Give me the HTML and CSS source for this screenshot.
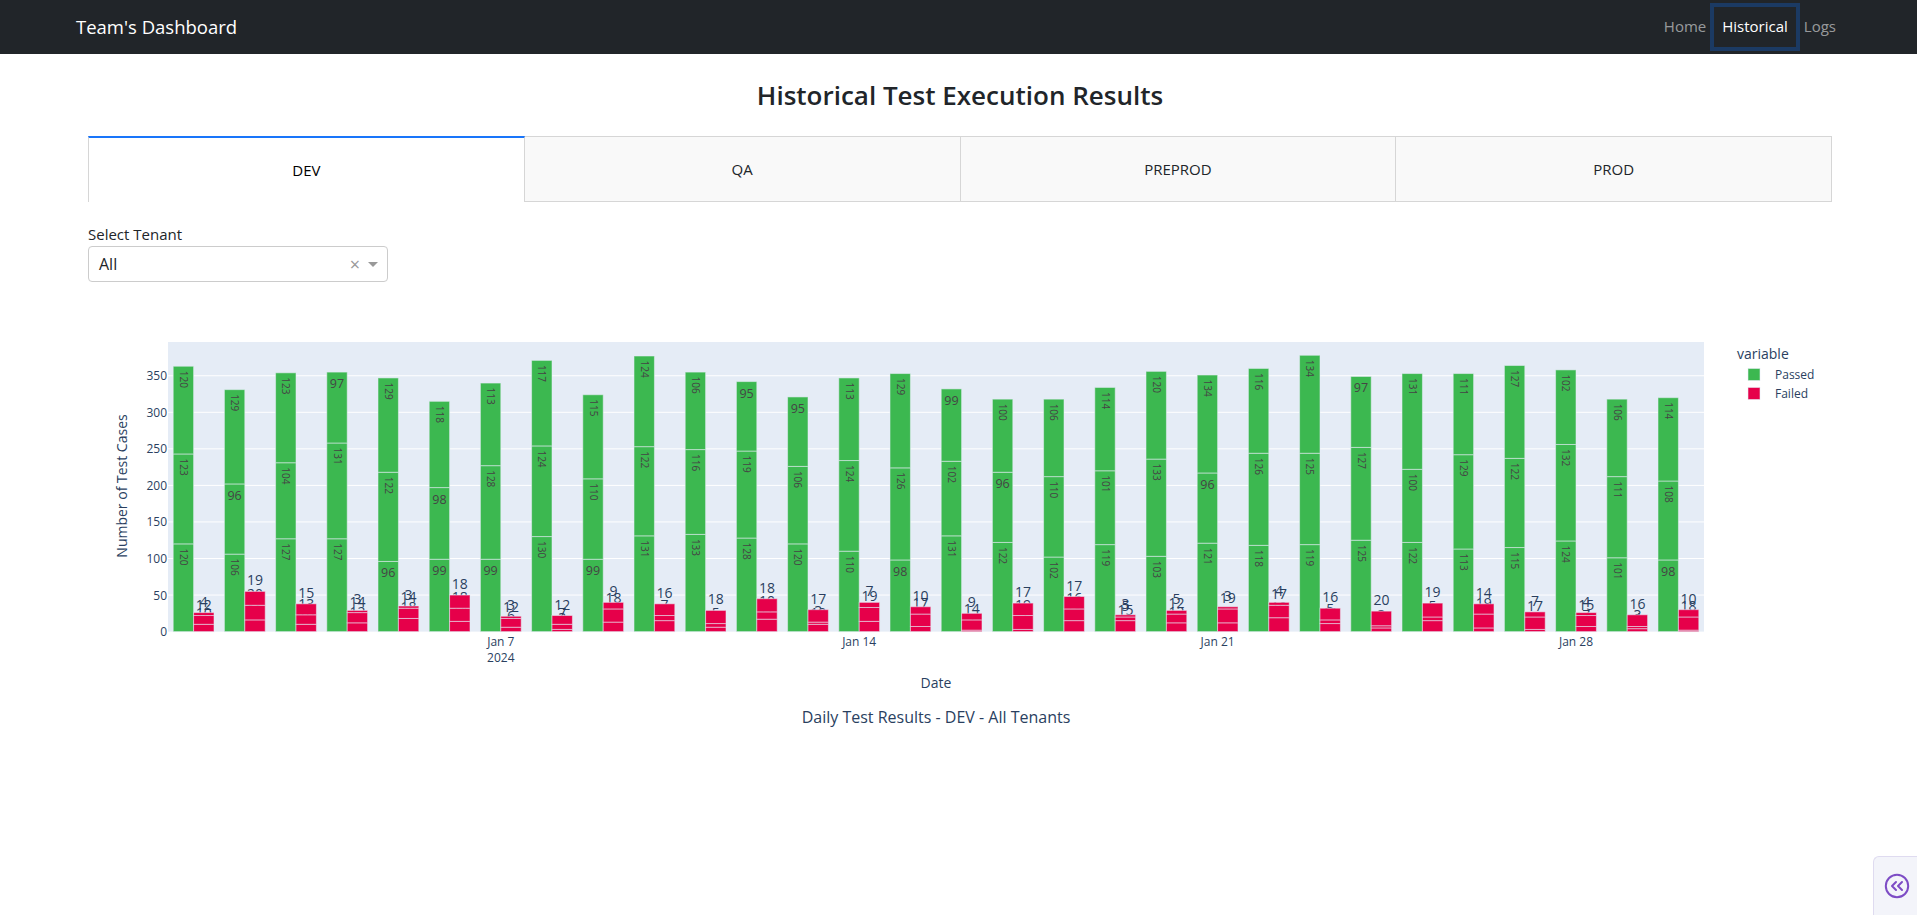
FILE: index.html
```html
<!DOCTYPE html>
<html lang="en">
<head>
    <meta charset="UTF-8">
    <title>Team's Dashboard</title>
    <link rel="stylesheet" href="styles.css">
</head>
<body>
    <!-- top navigation -->
    <nav class="navbar">
        <a class="brand">Team's Dashboard</a>
        <div class="nav-links">
            <a class="nav-link">Home</a>
            <a class="nav-link active">Historical</a>
            <a class="nav-link">Logs</a>
        </div>
    </nav>

    <main class="page">
        <h2 class="page-title">Historical Test Execution Results</h2>

        <div class="tabs">
            <div class="tab selected">DEV</div>
            <div class="tab">QA</div>
            <div class="tab">PREPROD</div>
            <div class="tab">PROD</div>
        </div>

        <div class="filter">
            <label class="filter-label">Select Tenant</label>
            <div class="select">
                <span class="select-value">All</span>
                <span class="select-clear">×</span>
                <span class="select-arrow"></span>
            </div>
        </div>

        <!-- chart.js fills this svg -->
        <svg id="chart" class="chart" width="1744" height="440"></svg>
    </main>

    <!-- collapsed side panel -->
    <div class="side-toggle">
        <svg width="26" height="26" viewBox="0 0 26 26" fill="none" stroke="#7d4cc5" stroke-width="2" stroke-linecap="round" stroke-linejoin="round">
            <circle cx="13" cy="13" r="11.2"/>
            <polyline points="12,9 8,13 12,17"/>
            <polyline points="18,9 14,13 18,17"/>
        </svg>
    </div>

    <script src="chart.js"></script>
</body>
</html>
```

FILE: styles.css
```css
* {
    box-sizing: border-box;
}

body {
    margin: 0;
    background-color: #fff;
    color: #212529;
    font-family: "Open Sans", "Noto Sans", sans-serif;
    font-size: 15px;
    overflow: hidden;
}

/* navbar */
.navbar {
    height: 54px;
    background-color: #212529;
    display: flex;
    align-items: center;
    justify-content: space-between;
    padding: 0 73px 0 76px;
}

.brand {
    color: #fff;
    font-size: 18.5px;
    padding-bottom: 2px;
}

.nav-links {
    display: flex;
}

.nav-link {
    height: 40px;
    line-height: 38px;
    padding: 0 8px;
    color: rgba(255, 255, 255, .55);
}

.nav-link.active {
    color: #fff;
    box-shadow: 0 0 0 4px #1b3a63;
}

/* page */
.page {
    padding: 0 85px 0 88px;
}

.page-title {
    margin: 0;
    height: 82px;
    line-height: 82px;
    text-align: center;
    font-size: 26px;
    font-weight: 600;
}

/* tabs */
.tabs {
    display: flex;
    height: 66px;
}

.tab {
    flex: 1;
    display: flex;
    align-items: center;
    justify-content: center;
    background-color: #f9f9f9;
    border: 1px solid #d6d6d6;
    border-left: none;
    font-size: 15px;
}

.tab.selected {
    background-color: #fff;
    border-left: 1px solid #d6d6d6;
    border-top: 2px solid #1975fa;
    border-bottom: none;
    color: #000;
}

/* tenant filter */
.filter {
    margin-top: 22px;
    width: 300px;
}

.filter-label {
    display: block;
    height: 22px;
    line-height: 20px;
}

.select {
    height: 36px;
    border: 1px solid #ccc;
    border-radius: 4px;
    display: flex;
    align-items: center;
    padding: 0 9px 0 10px;
}

.select-value {
    flex: 1;
    font-size: 16px;
}

.select-clear {
    color: #999;
    font-size: 18px;
    line-height: 1;
    margin-right: 8px;
}

.select-arrow {
    border-style: solid;
    border-width: 5px 5px 0;
    border-color: #999 transparent transparent;
}

/* chart */
.chart {
    display: block;
    margin-top: 18px;
    font-family: "Open Sans", verdana, arial, sans-serif;
}

.grid-line {
    stroke: #fff;
    stroke-width: 1;
}

.axis-text {
    fill: #2a3f5f;
    font-size: 12px;
}

.axis-title {
    fill: #2a3f5f;
    font-size: 14px;
}

.chart-title {
    fill: #2a3f5f;
    font-size: 16px;
}

.seg {
    stroke: #e5ecf6;
    stroke-opacity: .55;
    stroke-width: 1;
}

.seg-in {
    fill: #444;
}

.seg-out {
    fill: #2a3f5f;
    font-size: 14px;
}

/* bottom corner toggle */
.side-toggle {
    position: fixed;
    right: 0;
    bottom: 0;
    width: 44px;
    height: 59px;
    background-color: #f3f4fa;
    border: 1px solid #dfdbf0;
    border-right: none;
    border-bottom: none;
    border-top-left-radius: 6px;
    padding: 16px 0 0 10px;
}

.side-toggle svg {
    display: block;
}
```

FILE: chart.js
```js
(function () {
    // bottom, middle, top of each stack, one entry per day from Jan 1
    var passed = [
        [120, 123, 120], [106, 96, 129], [127, 104, 123], [127, 131, 97], [96, 122, 129],
        [99, 98, 118], [99, 128, 113], [130, 124, 117], [99, 110, 115], [131, 122, 124],
        [133, 116, 106], [128, 119, 95], [120, 106, 95], [110, 124, 113], [98, 126, 129],
        [131, 102, 99], [122, 96, 100], [102, 110, 106], [119, 101, 114], [103, 133, 120],
        [121, 96, 134], [118, 126, 116], [119, 125, 134], [125, 127, 97], [122, 100, 131],
        [113, 129, 111], [115, 122, 127], [124, 132, 102], [101, 111, 106], [98, 108, 114]
    ];
    var failed = [
        [10, 12, 4], [16, 20, 19], [10, 13, 15], [12, 14, 3], [18, 14, 3],
        [14, 18, 18], [6, 12, 3], [3, 7, 12], [13, 18, 9], [15, 7, 16],
        [6, 5, 18], [17, 10, 18], [10, 3, 17], [14, 19, 7], [7, 17, 10],
        [2, 14, 9], [3, 19, 17], [15, 16, 17], [15, 5, 3], [12, 12, 5],
        [12, 19, 3], [19, 17, 4], [11, 5, 16], [5, 3, 20], [15, 5, 19],
        [5, 19, 14], [3, 17, 7], [7, 15, 4], [4, 3, 16], [2, 18, 10]
    ];

    var GREEN = '#3cb850';
    var RED = '#e6004a';

    // plot area inside the svg
    var left = 80, top = 42, width = 1536, base = 331.6;
    var scale = 0.731;
    var pitch = width / 30;
    var barW = 20.4;

    var svg = document.getElementById('chart');

    function add(tag, attrs, text) {
        var el = document.createElementNS('http://www.w3.org/2000/svg', tag);
        for (var k in attrs) el.setAttribute(k, attrs[k]);
        if (text !== undefined) el.textContent = text;
        svg.appendChild(el);
        return el;
    }

    function y(v) {
        return base - v * scale;
    }

    // background and grid
    add('rect', { x: left, y: top, width: width, height: base - top, fill: '#e5ecf6' });
    for (var v = 0; v <= 350; v += 50) {
        if (v > 0) add('line', { 'class': 'grid-line', x1: left, x2: left + width, y1: y(v), y2: y(v) });
        add('text', { 'class': 'axis-text', x: left - 1, y: y(v) + 4.5, 'text-anchor': 'end' }, v);
    }

    // x ticks
    [[6, 'Jan 7'], [13, 'Jan 14'], [20, 'Jan 21'], [27, 'Jan 28']].forEach(function (t) {
        var cx = left + pitch * (t[0] + 0.5);
        add('text', { 'class': 'axis-text', x: cx, y: base + 14, 'text-anchor': 'middle' }, t[1]);
    });
    add('text', { 'class': 'axis-text', x: left + pitch * 6.5, y: base + 30, 'text-anchor': 'middle' }, '2024');

    function insideLabel(cx, segTop, value) {
        if (value >= 100) {
            // three digits do not fit across the bar, so plotly turns them
            add('text', {
                'class': 'seg-in', 'font-size': 10,
                transform: 'translate(' + cx + ',' + (segTop + 4.5) + ') rotate(90)',
                dy: '.35em'
            }, value);
        } else {
            add('text', {
                'class': 'seg-in', 'font-size': 12.5, x: cx, y: segTop + 16, 'text-anchor': 'middle'
            }, value);
        }
    }

    function stack(x, values, color, inside) {
        var sum = 0;
        var cx = x + barW / 2;
        values.forEach(function (value) {
            var bottom = y(sum);
            sum += value;
            var segTop = y(sum);
            add('rect', { 'class': 'seg', x: x, y: segTop, width: barW, height: bottom - segTop, fill: color });
            if (inside) {
                insideLabel(cx, segTop, value);
            } else {
                add('text', { 'class': 'seg-out', x: cx, y: segTop - 6, 'text-anchor': 'middle' }, value);
            }
        });
    }

    for (var i = 0; i < 30; i++) {
        var gx = left + pitch * i + 5.2;
        stack(gx, passed[i], GREEN, true);
        stack(gx + barW, failed[i], RED, false);
    }

    // axis titles
    add('text', {
        'class': 'axis-title', 'text-anchor': 'middle',
        transform: 'translate(39,186) rotate(-90)'
    }, 'Number of Test Cases');
    add('text', { 'class': 'axis-title', x: 848, y: 388, 'text-anchor': 'middle' }, 'Date');
    add('text', { 'class': 'chart-title', x: 848, y: 423, 'text-anchor': 'middle' }, 'Daily Test Results - DEV - All Tenants');

    // legend
    add('text', { 'class': 'axis-title', x: 1649, y: 59 }, 'variable');
    add('rect', { 'class': 'seg', x: 1660, y: 68.5, width: 12, height: 12, fill: GREEN });
    add('rect', { 'class': 'seg', x: 1660, y: 87.5, width: 12, height: 12, fill: RED });
    add('text', { 'class': 'axis-text', x: 1687, y: 79 }, 'Passed');
    add('text', { 'class': 'axis-text', x: 1687, y: 98 }, 'Failed');
})();
```
